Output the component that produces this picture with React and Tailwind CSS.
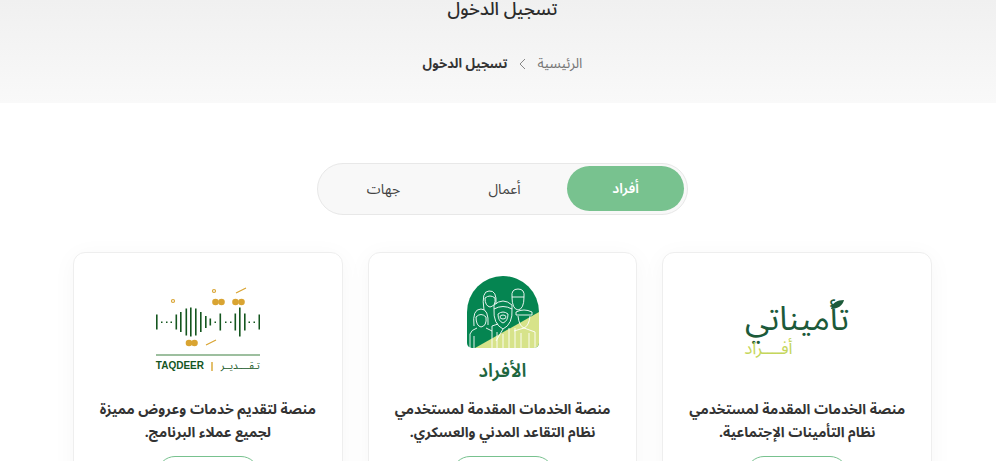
import React from 'react';

const FONT = "font-['Noto_Sans_Arabic','Noto_Sans','DejaVu_Sans',sans-serif]";

// bars of the Taqdeer wave form: [x, height], height 0 is a dot
const WAVE = [
  [0, 15], [5, 0], [10, 0], [14.5, 0], [19.5, 15], [24, 20], [29.5, 27], [34, 29], [39, 27], [44, 20],
  [49, 12], [53.5, 7], [58.5, 0], [63.5, 17], [69, 0], [74, 0], [78.5, 17], [83, 29], [88, 17], [92.5, 0],
  [97.5, 0], [102.5, 15],
];

const TaqdeerLogo = () => (
  <div className="flex flex-col items-center w-[104px] h-[90px] mt-[11px]">
    <svg width="104" height="66" viewBox="0 0 104 66">
      <g fill="#d9a432">
        <circle cx="59.5" cy="15" r="3.3" /><circle cx="65.5" cy="15" r="3.3" />
        <circle cx="79.5" cy="15" r="3.3" /><circle cx="85.5" cy="15" r="3.3" />
        <circle cx="33" cy="56" r="3.3" /><circle cx="38.5" cy="56" r="3.3" />
      </g>
      <g fill="none" stroke="#d9a432" strokeWidth="1.2">
        <circle cx="58" cy="4" r="1.5" />
        <circle cx="17" cy="14" r="1.5" />
        <path d="M80 6 L90 1 M50 58 L60 53" />
      </g>
      <g fill="#14561f">
        {WAVE.map(([x, h]) => (h === 0
          ? <rect key={x} x={x} y="34.5" width="1.5" height="1.5" />
          : <rect key={x} x={x} y={35 - h / 2} width="1.6" height={h} />))}
      </g>
    </svg>
    <div className="w-[104px] h-[2px] bg-[#9dbf9f] mt-[1px]" />
    <div dir="ltr" className="w-[104px] flex items-center justify-between mt-[5px] text-[#14561f] leading-none">
      <span className="text-[10px] font-bold font-['Liberation_Sans',sans-serif]">TAQDEER</span>
      <span className="w-[2px] h-[9px] bg-[#e3c06e]" />
      <span dir="rtl" className={`text-[10px] ${FONT}`}>تـقــــديــر</span>
    </div>
  </div>
);

const PeopleLogo = () => (
  <svg width="72" height="72" viewBox="0 0 72 72">
    <path d="M0 36 A36 36 0 0 1 72 36 V67 A5 5 0 0 1 67 72 H5 A5 5 0 0 1 0 67 Z" fill="#058551" />
    <path d="M8 72 L72 36 V67 A5 5 0 0 1 67 72 Z" fill="#d7e38a" />
    <g fill="none" stroke="#fff" strokeWidth="0.9">
      {/* back woman */}
      <path d="M17 34 Q14 15 22 15 Q30 14 29 28" />
      <path d="M18 22 Q23 18 28 22 Q29 30 23 31 Q18 30 18 22 Z" />
      {/* back man */}
      <path d="M45 21 Q44 13 51 13 Q58 13 57 21 Z" />
      <path d="M45 21 Q45 33 51 34 Q57 33 57 21" />
      {/* front woman */}
      <path d="M7 50 Q5 33 14 33 Q22 33 21 49" />
      <path d="M9 41 Q14 36 19 41 Q20 50 14 51 Q9 50 9 41 Z" />
      <path d="M3 72 V58 Q4 54 10 52 M19 52 L25 55 M7 72 V60" />
      {/* center man */}
      <path d="M27 29 Q36 21 45 29 L45 33 Q36 28 27 33 Z" />
      <path d="M27 33 Q26 48 36 53 Q46 48 45 33" />
      <path d="M31 38 Q36 34 41 38 Q41 45 36 47 Q31 45 31 38 Z" />
      <ellipse cx="36" cy="41" rx="3" ry="2" />
      <path d="M25 72 V50 L31 48 M30 72 V56 M36 53 L29 65 M36 72 V58 M42 72 V52 M48 72 V52" />
      {/* front man */}
      <path d="M49 36 Q57 32 65 36 V39 H49 Z" />
      <path d="M51 40 Q52 50 57 52 Q62 50 63 40" />
      <path d="M47 55 L57 52 L68 56 V72 M54 72 V57 M62 72 V57" />
    </g>
  </svg>
);

const TameenatiLogo = () => (
  <div className="w-[106px] mt-[24px] flex flex-col items-end relative">
    <svg className="absolute top-0 right-[6px]" width="13" height="9" viewBox="0 0 13 9">
      <path d="M0 9 C1 3 6 0 13 0 C12 5 7 9 0 9 Z" fill="#1c5a3a" />
    </svg>
    <div dir="rtl" className={`w-full text-center text-[33px] leading-[40px] text-[#1c5a3a] whitespace-nowrap ${FONT}`}>تأميناتي</div>
    <div dir="rtl" className={`text-[17px] leading-[18px] text-[#c5d65a] whitespace-nowrap ${FONT}`}>أفــــراد</div>
  </div>
);

const cards = [
  { id: 'tameenati', logo: <TameenatiLogo />, lines: ['منصة الخدمات المقدمة لمستخدمي', 'نظام التأمينات الإجتماعية.'] },
  { id: 'afrad', logo: <PeopleLogo />, title: 'الأفراد', lines: ['منصة الخدمات المقدمة لمستخدمي', 'نظام التقاعد المدني والعسكري.'] },
  { id: 'taqdeer', logo: <TaqdeerLogo />, lines: ['منصة لتقديم خدمات وعروض مميزة', 'لجميع عملاء البرنامج.'] },
];

const ServiceCard = ({ card }) => (
  <div className="bg-white border border-[#eeeeee] rounded-xl shadow-[0_4px_24px_rgba(0,0,0,0.04)] h-[260px] pt-[23px] flex flex-col items-center">
    <div className="h-[115px] flex flex-col items-center">
      {card.logo}
      {card.title && (
        <div className="text-[19px] leading-[24px] mt-[11px] font-semibold text-[#20663f]">{card.title}</div>
      )}
    </div>
    <div className="mt-[7px] text-[14px] leading-[23px] font-bold text-[#333333] text-center whitespace-nowrap">
      {card.lines.map((line) => <p key={line}>{line}</p>)}
    </div>
    <div className="mt-[12px] w-[102px] h-[36px] rounded-full border border-[#78c28f] shrink-0" />
  </div>
);

const App = () => {
  return (
    <div dir="rtl" className={`h-[461px] w-[996px] overflow-hidden bg-white ${FONT}`}>
      {/* Page header */}
      <div className="h-[103px] pl-[9px] bg-gradient-to-b from-[#f0f0f0] to-[#f9f9f9] flex flex-col items-center">
        <h1 className="text-[18px] leading-[18px] text-[#2b2b2b] font-medium">تسجيل الدخول</h1>
        <div className="mt-[36px] flex items-center gap-[11px] text-[13px] leading-[20px]">
          <span className="text-[14px] text-[#777777]">الرئيسية</span>
          <svg width="8" height="12" viewBox="0 0 8 12" fill="none" stroke="#888888" strokeWidth="1">
            <path d="M7 1 L2 6 L7 11" />
          </svg>
          <span className="font-bold text-[#333333]">تسجيل الدخول</span>
        </div>
      </div>

      {/* Account type tabs */}
      <div className="mt-[60px] pl-[9px] flex justify-center">
        <div className="w-[371px] h-[52px] rounded-full border border-[#e8e8e8] bg-[#f8f8f8] p-[2px] flex items-center text-[14px] text-[#444444]">
          <div className="w-[117px] h-[45px] mb-[1px] rounded-full bg-[#78c28f] text-white font-semibold flex items-center justify-center mr-[1px]">أفراد</div>
          <div className="w-[125px] flex justify-center">أعمال</div>
          <div className="w-[117px] flex justify-center">جهات</div>
        </div>
      </div>

      {/* Service cards */}
      <div className="pl-[9px] mt-[37px]">
        <div className="mx-auto w-[859px] grid grid-cols-3 gap-[25px]">
          {cards.map((card) => <ServiceCard key={card.id} card={card} />)}
        </div>
      </div>
    </div>
  );
};

export default App;
